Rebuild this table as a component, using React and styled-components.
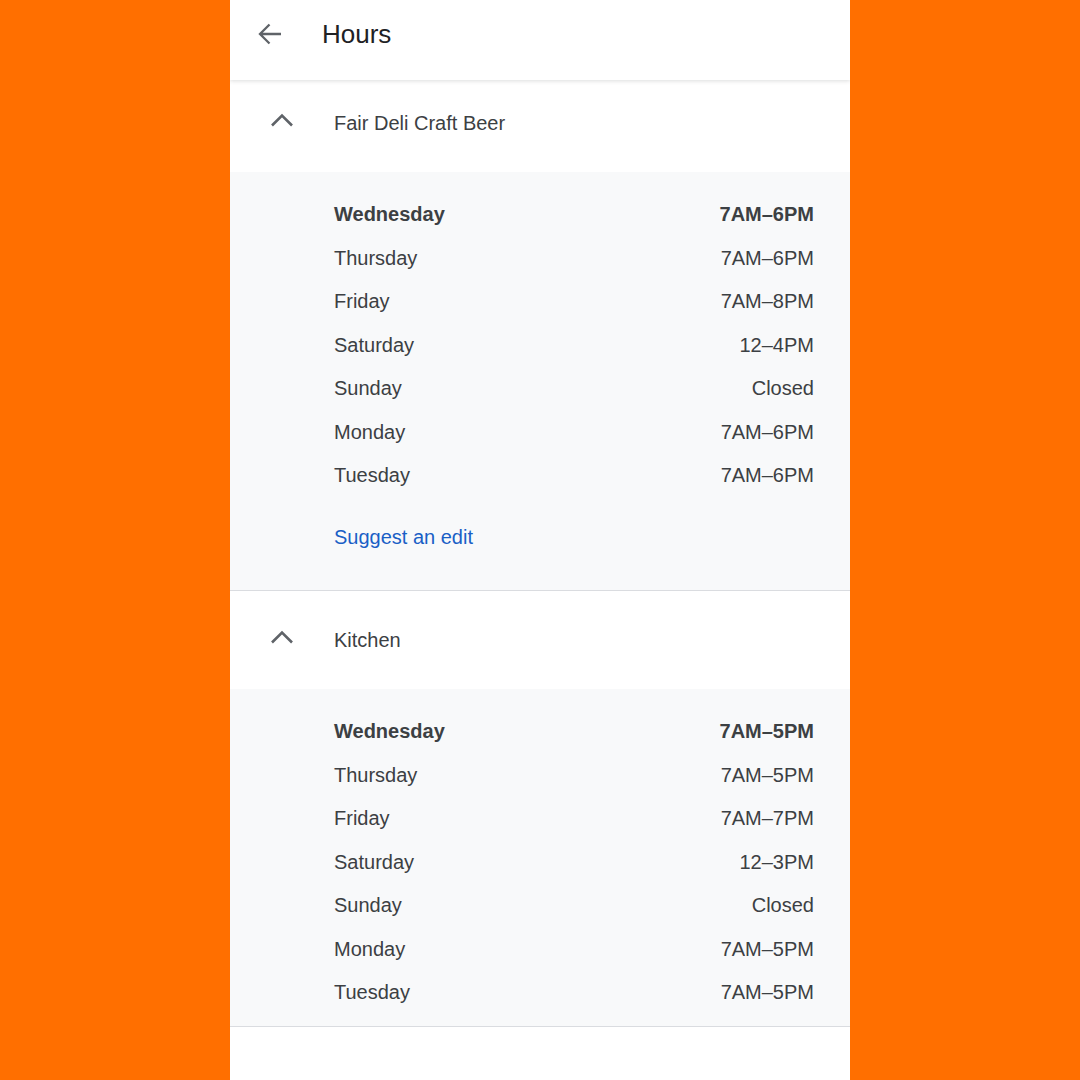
import React from 'react'
import styled, { createGlobalStyle } from 'styled-components'

const GlobalStyle = createGlobalStyle`
  html, body {
    margin: 0;
    padding: 0;
    background: #ff6f00;
  }
  body {
    font-family: "Liberation Sans", Arial, sans-serif;
  }
`

const Page = styled.div`
  display: flex;
  justify-content: center;
  height: 1080px;
  overflow: hidden;
`
const Panel = styled.div`
  width: 620px;
  height: 1080px;
  background: #fff;
  display: flex;
  flex-direction: column;
  overflow: hidden;
`
const TopBar = styled.div`
  position: relative;
  z-index: 2;
  height: 80px;
  flex-shrink: 0;
  display: flex;
  align-items: center;
  background: #fff;
  box-shadow: 0 1px 4px rgba(60, 64, 67, 0.18);
`
const BackButton = styled.div`
  width: 80px;
  margin-right: 12px;
  display: flex;
  justify-content: center;
  align-items: center;
  margin-top: -12px;
`
const Title = styled.h1`
  margin: -12px 0 0;
  font-size: 26px;
  font-weight: 400;
  color: #202124;
`
const Scroll = styled.div`
  margin-top: -6px;
`
const Section = styled.section`
  border-bottom: 1px solid #dadce0;
`
const SectionHead = styled.div`
  height: 98px;
  display: flex;
  align-items: center;
`
const Chevron = styled.div`
  width: 104px;
  display: flex;
  justify-content: center;
  margin-top: -6px;
`
const SectionTitle = styled.span`
  font-size: 20px;
  color: #3c4043;
`
const Body = styled.div`
  background: #f8f9fa;
  padding: 21px 36px ${(p) => p.$bottom}px 104px;
`
const Row = styled.div`
  height: 43.5px;
  display: flex;
  justify-content: space-between;
  align-items: center;
  font-size: 20px;
  color: #3c4043;
  font-weight: ${(p) => (p.$today ? 700 : 400)};
`
const EditLink = styled.a`
  display: flex;
  align-items: center;
  height: 43.5px;
  margin-top: 18px;
  font-size: 20px;
  color: #1a5fc6;
  text-decoration: none;
`

const ArrowBack = () => (
  <svg width="26" height="24" viewBox="0 0 26 24">
    <path
      d="M24 12H3M12.5 2.5L3 12l9.5 9.5"
      fill="none"
      stroke="#5f6368"
      strokeWidth="2.3"
    />
  </svg>
)

const ExpandLess = () => (
  <svg width="22" height="14" viewBox="0 0 22 14">
    <path d="M1 12.5L11 2.5l10 10" fill="none" stroke="#5f6368" strokeWidth="2.6" />
  </svg>
)

const sections = [
  {
    name: 'Fair Deli Craft Beer',
    edit: true,
    hours: [
      ['Wednesday', '7AM–6PM'],
      ['Thursday', '7AM–6PM'],
      ['Friday', '7AM–8PM'],
      ['Saturday', '12–4PM'],
      ['Sunday', 'Closed'],
      ['Monday', '7AM–6PM'],
      ['Tuesday', '7AM–6PM'],
    ],
  },
  {
    name: 'Kitchen',
    edit: false,
    hours: [
      ['Wednesday', '7AM–5PM'],
      ['Thursday', '7AM–5PM'],
      ['Friday', '7AM–7PM'],
      ['Saturday', '12–3PM'],
      ['Sunday', 'Closed'],
      ['Monday', '7AM–5PM'],
      ['Tuesday', '7AM–5PM'],
    ],
  },
]

export default function App() {
  return (
    <>
      <GlobalStyle />
      <Page>
        <Panel>
          <TopBar>
            <BackButton>
              <ArrowBack />
            </BackButton>
            <Title>Hours</Title>
          </TopBar>
          <Scroll>
            {sections.map((s) => (
              <Section key={s.name}>
                <SectionHead>
                  <Chevron>
                    <ExpandLess />
                  </Chevron>
                  <SectionTitle>{s.name}</SectionTitle>
                </SectionHead>
                <Body $bottom={s.edit ? 31 : 11}>
                  {s.hours.map(([day, time], i) => (
                    <Row key={day} $today={i === 0}>
                      <span>{day}</span>
                      <span>{time}</span>
                    </Row>
                  ))}
                  {s.edit && <EditLink href=".">Suggest an edit</EditLink>}
                </Body>
              </Section>
            ))}
          </Scroll>
        </Panel>
      </Page>
    </>
  )
}
